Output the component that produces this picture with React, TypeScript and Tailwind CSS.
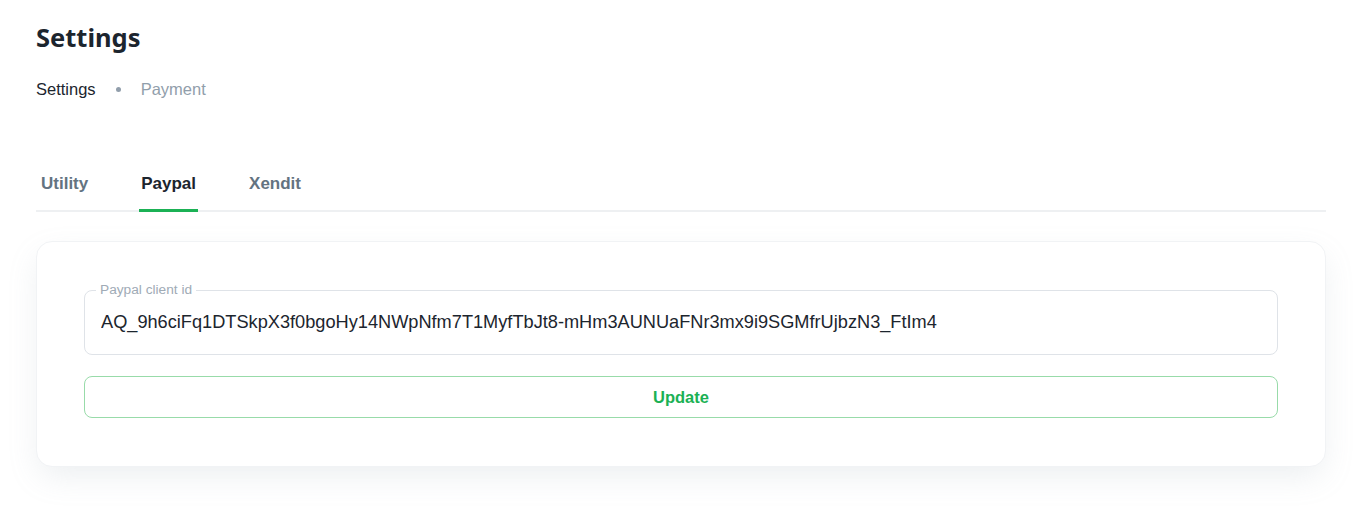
import React, { useState } from 'react';

const tabs = ['Utility', 'Paypal', 'Xendit'];

const PaypalCard: React.FC = () => {
    const [clientId, setClientId] = useState('AQ_9h6ciFq1DTSkpX3f0bgoHy14NWpNfm7T1MyfTbJt8-mHm3AUNUaFNr3mx9i9SGMfrUjbzN3_FtIm4');

    return (
        <div className="mt-[29px] bg-white rounded-2xl border border-[#f1f3f5] shadow-[0_12px_32px_-4px_rgba(145,158,171,0.18)] px-[47px] pt-12 pb-12">
            <div className="relative">
                <label className="absolute -top-[9px] left-[12px] bg-white px-[4px] text-[13.7px] leading-[18px] text-[#a0abb6]">
                    Paypal client id
                </label>
                <input
                    className="w-full h-[65px] rounded-lg border border-[#dfe3e8] px-4 text-[18.2px] text-[#1c252e] focus:outline-none"
                    value={clientId}
                    onChange={e => setClientId(e.target.value)}
                />
            </div>
            <button className="mt-[21px] w-full h-[42px] rounded-lg border border-[#98dba9] text-[#1bb155] font-bold text-[16.5px]">
                Update
            </button>
        </div>
    );
};

export default function App() {
    const [active, setActive] = useState('Paypal');

    return (
        <div className="min-h-[528px] bg-white pl-9 pr-10 pt-[19px] font-['Liberation_Sans',Arial,sans-serif]">
            <h1 className="font-['Noto_Sans',sans-serif] text-[25.5px] leading-[36px] font-bold text-[#1c252e]">Settings</h1>
            <div className="mt-[23px] flex items-center text-[16.5px] leading-[22px]">
                <span className="text-[#1c252e]">Settings</span>
                <span className="mx-[20px] w-[5px] h-[5px] rounded-full bg-[#919eab]" />
                <span className="text-[#919eab]">Payment</span>
            </div>
            <div className="mt-[72px] flex border-b-2 border-[#eef0f2]">
                {tabs.map(t => (
                    <button
                        key={t}
                        onClick={() => setActive(t)}
                        className={`relative mr-[53px] first:ml-[5px] pb-[14px] text-[17px] leading-[24px] font-bold ${active === t ? 'text-[#1c252e]' : 'text-[#637381]'}`}
                    >
                        {t}
                        {active === t && <span className="absolute -left-[2px] -right-[2px] -bottom-[2px] h-[3px] bg-[#1bb155]" />}
                    </button>
                ))}
            </div>
            <PaypalCard />
        </div>
    );
}
